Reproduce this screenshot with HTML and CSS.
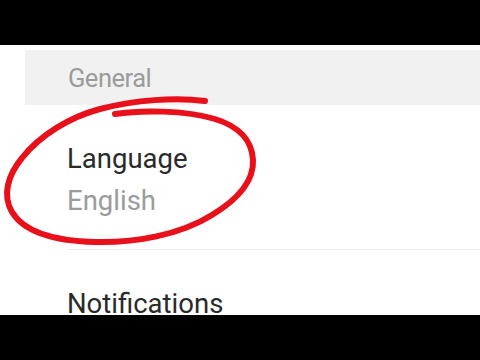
FILE: index.html
```html
<!DOCTYPE html>
<html lang="en">
<head>
<meta charset="utf-8">
<title>Settings</title>
<link rel="stylesheet" href="styles.css">
</head>
<body>
<div class="screen">
  <div class="letterbox"></div>
  <main class="settings">
    <div class="section-header">General</div>
    <div class="item item-divided">
      <div class="item-title">Language</div>
      <div class="item-summary">English</div>
    </div>
    <div class="item item-last">
      <div class="item-title">Notifications</div>
    </div>
  </main>
  <div class="letterbox letterbox-bottom"></div>
  <svg class="annotation" viewBox="0 0 480 360" width="480" height="360" aria-hidden="true">
    <path d="M205,101 C175,97 135,100 100,109 C70,117 40,135 22,158 C8,175 2,195 12,212 C24,232 55,241 95,242 C135,243 180,235 212,215 C240,198 254,180 253,160 C252,140 238,126 215,119 C185,110 140,110 115,114" fill="none" stroke="#e8101a" stroke-width="6" stroke-linecap="round" stroke-linejoin="round"/>
  </svg>
</div>
</body>
</html>
```
FILE: styles.css
```css
html, body {
  margin: 0;
  padding: 0;
  background: #ffffff;
}

.screen {
  position: relative;
  width: 480px;
  height: 360px;
  overflow: hidden;
  display: flex;
  flex-direction: column;
  font-family: Roboto, "Noto Sans", "Liberation Sans", sans-serif;
}

.letterbox {
  height: 45px;
  background: #000000;
  flex: none;
}

.letterbox-bottom {
  position: relative;
  z-index: 1;
}

.settings {
  flex: 1;
  padding-top: 5px;
  overflow: hidden;
  min-height: 0;
}

.section-header {
  margin-left: 25px;
  height: 55px;
  box-sizing: border-box;
  padding: 14px 0 0 43px;
  background: #f1f1f1;
  color: #9b9b9b;
  font-size: 25.5px;
  line-height: 29px;
  letter-spacing: -0.5px;
}

.item {
  margin-left: 67px;
  font-size: 27.5px;
  line-height: 32px;
}

.item-divided {
  padding-top: 38px;
  padding-bottom: 32px;
  border-bottom: 1px solid #eeeeee;
}

.item-last {
  padding-top: 38px;
}

.item-title {
  color: #2a2a2a;
}

.item-summary {
  margin-top: 10px;
  color: #9b9b9b;
}

.annotation {
  position: absolute;
  left: 0;
  top: 0;
  pointer-events: none;
}
```
